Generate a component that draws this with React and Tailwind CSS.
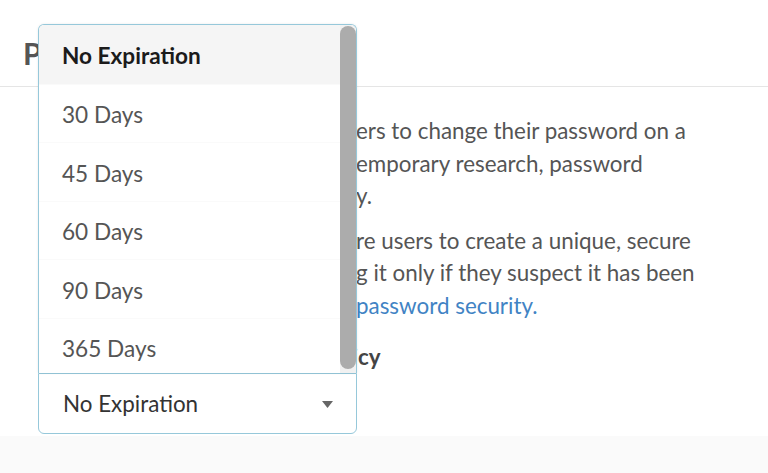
import React from "react"

const options = ["No Expiration", "30 Days", "45 Days", "60 Days", "90 Days", "365 Days"]

const lines = [
  [
    ["Auth0 does not recommend forcing us", "ers to change their password on a"],
    ["regular basis. According to cont", "emporary research, password"],
    ["expiration weakens overall securit", "y."],
  ],
  [
    ["Instead, we recommend that you requi", "re users to create a unique, secure"],
    ["password and consider changin", "g it only if they suspect it has been"],
  ],
]

function Line({ prefix, suffix, link, cut = "w-[318px]" }) {
  return (
    <div className="flex whitespace-nowrap">
      <span className={cut + " shrink-0 overflow-hidden flex justify-end"}>{prefix}</span>
      <span className={link ? "text-[#4183c4]" : ""}>{suffix}</span>
    </div>
  )
}

function ExpirationSelect() {
  return (
    <div className="relative w-[319px]">
      {/* open menu, upward */}
      <div className="absolute bottom-full left-0 w-full h-[349px] flex bg-white border border-b-0 border-[#96c8da] rounded-t-[6px] overflow-hidden shadow-[0_0_3px_0_rgba(0,0,0,0.08)]">
        <div className="flex-1 overflow-hidden">
          {options.map((opt, i) => (
            <div
              key={opt}
              className={
                "h-[58.5px] flex items-center pl-[23px] pt-[4px] text-[22.6px] " +
                (i === 0
                  ? "bg-[#f5f5f5] font-bold text-[#1b1b1b]"
                  : "border-t border-[#fafafa] text-[#555]")
              }
            >
              {opt}
            </div>
          ))}
        </div>
        <div className="w-[16px] bg-[#f1f1f1] pt-[1px] pb-[4px] flex">
          <div className="flex-1 rounded-full bg-[#acacac]" />
        </div>
      </div>

      <div className="h-[61px] border border-[#96c8da] rounded-b-[6px] bg-white flex items-center justify-between pl-[24px] pr-[23px] pt-[1px] text-[22.4px] text-[#333]">
        <span>No Expiration</span>
        <svg width="11" height="7" viewBox="0 0 11 7">
          <path d="M0 0h11L5.5 7z" fill="#666" />
        </svg>
      </div>
    </div>
  )
}

export default function App() {
  return (
    <div className="min-h-[473px] bg-white font-['Lato',sans-serif] overflow-hidden">
      <div className="h-[87px] border-b border-[#e5e5e5] px-[23px] pt-[31px]">
        <h2 className="text-[30px] font-bold text-[#555]">Password Policy</h2>
      </div>

      <div className="pl-[38px] pt-[28px]">
        {lines.map((para, p) => (
          <div key={p} className="text-[22.4px] leading-[32.5px] text-[#555] mb-[12px]">
            {para.map(([a, b]) => (
              <Line key={b} prefix={a} suffix={b} />
            ))}
            {p === 1 && (
              <Line prefix="compromised. Learn more about " suffix="password security." link />
            )}
          </div>
        ))}

        <label className="block mt-[21px] mb-[2px] text-[22.4px] leading-[28px] font-bold text-[#444]">
          <Line prefix="Password Expiration Poli" suffix="cy" cut="w-[320px]" />
        </label>
        <ExpirationSelect />
      </div>

      <div className="mt-[2px] h-[60px] bg-[#fafafa]" />
    </div>
  )
}
